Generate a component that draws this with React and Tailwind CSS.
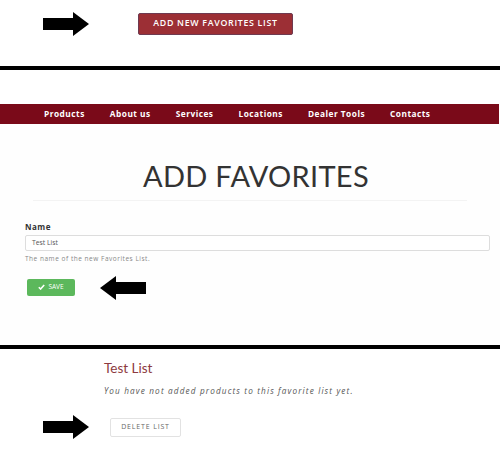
import React from "react";

function Arrow({ left = false }) {
  return (
    <svg width="46" height="24" viewBox="0 0 46 24" className="block shrink-0">
      {left ? (
        <polygon points="46,6 16,6 16,0 0,12 16,24 16,18 46,18" fill="#000" />
      ) : (
        <polygon points="0,6 30,6 30,0 46,12 30,24 30,18 0,18" fill="#000" />
      )}
    </svg>
  );
}

const mont = { fontFamily: '"Open Sans", "Noto Sans", sans-serif' };
const futura = { fontFamily: 'Lato, "Noto Sans", sans-serif' };

export default function App() {
  const nav = ["Products", "About us", "Services", "Locations", "Dealer Tools", "Contacts"];
  return (
    <div className="w-[500px] h-[450px] bg-white overflow-hidden flex flex-col" style={mont}>
      {/* top */}
      <div className="h-[66px] flex items-start pl-[43px] pt-[12px]">
        <Arrow />
        <div className="ml-[49px] mt-[1px] w-[155px] h-[22px] bg-[#9c2f35] border border-[#6e3a50] rounded-[2px] flex items-center justify-center text-white text-[8.8px] tracking-[0.08em] font-semibold">
          ADD NEW FAVORITES LIST
        </div>
      </div>
      <div className="h-[4px] bg-black" />
      <div className="h-[34px]" />
      {/* nav */}
      <div className="h-[20px] bg-[#7a0a19] flex items-center pl-[44px] gap-[25px] mr-[1px]">
        {nav.map((n) => (
          <span key={n} className="text-white font-bold text-[8.3px] tracking-[0.06em] leading-none">
            {n}
          </span>
        ))}
      </div>
      {/* form */}
      <div className="h-[221px] flex flex-col bg-[#fefefe]">
        <div className="pt-[38px] flex justify-center pl-[12px]">
          <h1 className="text-[29px] leading-[28px] text-[#333] tracking-[0.01em]" style={futura}>
            ADD FAVORITES
          </h1>
        </div>
        <div className="mt-[10px] mx-[33px] h-px bg-[#f3f3f3]" />
        <div className="pl-[25px] pr-[10px] pt-[21px] flex flex-col">
          <label className="text-[8px] font-bold text-[#333] leading-[10px] tracking-[0.06em]">Name</label>
          <div className="mt-[3px] h-[16px] border border-[#ddd] rounded-[2px] bg-white flex items-center pl-[6px] text-[6.8px] text-[#555]">
            Test List
          </div>
          <div className="mt-[4px] text-[6.5px] text-[#888] tracking-[0.08em] leading-[8px]">
            The name of the new Favorites List.
          </div>
          <div className="mt-[11px] flex items-center">
            <div className="ml-[2px] w-[48px] h-[17px] bg-[#5cb85c] rounded-[2px] flex items-center justify-center gap-[3px] text-white text-[6.5px]">
              <svg width="7" height="6" viewBox="0 0 7 6">
                <polyline points="0.8,3.2 2.6,5 6.2,1" fill="none" stroke="#fff" strokeWidth="1.6" />
              </svg>
              SAVE
            </div>
            <div className="ml-[25px] mt-[2px]">
              <Arrow left />
            </div>
          </div>
        </div>
      </div>
      <div className="h-[4px] bg-black" />
      {/* list */}
      <div className="flex flex-col pl-[104px] pt-[11px]">
        <div className="text-[13.5px] leading-[16px] text-[#8d3a40]" style={futura}>Test List</div>
        <div className="mt-[10px] text-[8.2px] italic text-[#555] tracking-[0.14em] leading-[10px]">
          You have not added products to this favorite list yet.
        </div>
      </div>
      <div className="mt-[19px] flex items-center pl-[43px]">
        <Arrow />
        <div className="ml-[21px] w-[71px] h-[19px] border border-[#e2e2e2] rounded-[2px] bg-white flex items-center justify-center text-[7px] text-[#666] tracking-[0.12em]">
          DELETE LIST
        </div>
      </div>
    </div>
  );
}
